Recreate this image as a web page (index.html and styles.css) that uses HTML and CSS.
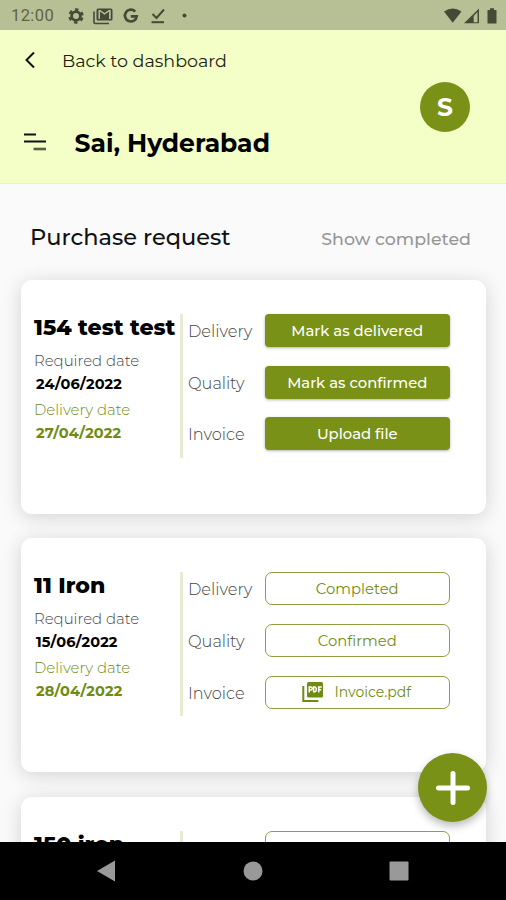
FILE: index.html
```html
<!DOCTYPE html>
<html lang="en">
<head>
<meta charset="utf-8">
<title>Purchase request</title>
<link rel="stylesheet" href="styles.css">
</head>
<body>
<div class="screen">
  <div class="status">
    <span class="clock">12:00</span>
    <svg class="status-left" width="125" height="18" viewBox="0 0 125 18" fill="#454a36">
      <g fill="none" stroke="#454a36"><circle cx="8" cy="9" r="4.400" stroke-width="2.800"/><circle cx="8" cy="9" r="6.500" stroke-width="2.400" stroke-dasharray="3.403 3.403" stroke-dashoffset="-1.700"/></g>
      <path d="M26 4.500v11q0 1 1 1h14" fill="none" stroke="#454a36" stroke-width="1.600"/>
      <path fill-rule="evenodd" d="M30 1.500h13q1.500 0 1.500 1.500v9q0 1.500-1.500 1.500h-13q-1.500 0-1.500-1.500v-9q0-1.500 1.500-1.500zM30.500 3v9h1.500v-7.500l4.500 3.300 4.500-3.300v7.500h1.700v-9h-2l-4.200 3-4.200-3z"/>
      <path d="M67.200 4.600A5.900 5.900 0 1 0 68.700 9.300H62.800" fill="none" stroke="#454a36" stroke-width="2.700"/>
      <path d="M84.500 7l4 4 7.500-8.500" fill="none" stroke="#454a36" stroke-width="2"/><path d="M83.500 14.200h12.500v2h-12.500z"/>
      <circle cx="116.500" cy="8.500" r="2"/>
    </svg>
    <svg class="status-right" width="54" height="18" viewBox="0 0 54 18" fill="#454a36">
      <path d="M0 4.500Q8.700-1.500 17.500 4.500L8.700 15.800z"/>
      <path fill-rule="evenodd" d="M35 1.500v14.800H20zM33.500 5l-3.800 4v6.300h3.800z"/>
      <path d="M43.500 3h2.500v-1.700h4v1.700h2.500v13.500h-9z"/>
    </svg>
  </div>
  <header class="header">
    <div class="header-main">
      <div class="back"><svg width="12" height="18" viewBox="0 0 12 18" fill="none" stroke="#111" stroke-width="2"><path d="M10 1.500L2.500 9l7.500 7.500"/></svg><span>Back to dashboard</span></div>
      <div class="place"><svg width="24" height="20" viewBox="0 0 24 20" stroke="#111" stroke-width="2"><path d="M1 2.500h12M1 9.500h22"/><path d="M10.500 17h12.500" stroke="#59603f" stroke-width="2.600"/></svg><h1>Sai, Hyderabad</h1></div>
    </div>
    <div class="avatar">S</div>
  </header>
  <main class="main">
    <div class="heading"><h2>Purchase request</h2><span class="show">Show completed</span></div>
    <article class="card">
      <div class="info">
        <h3>154 test test</h3>
        <p class="label">Required date</p><p class="date">24/06/2022</p>
        <p class="label green">Delivery date</p><p class="date green">27/04/2022</p>
      </div>
      <div class="steps">
        <div class="step"><span>Delivery</span><button class="btn">Mark as delivered</button></div>
        <div class="step"><span>Quality</span><button class="btn">Mark as confirmed</button></div>
        <div class="step"><span>Invoice</span><button class="btn">Upload file</button></div>
      </div>
    </article>
    <article class="card">
      <div class="info">
        <h3>11 Iron</h3>
        <p class="label">Required date</p><p class="date">15/06/2022</p>
        <p class="label green">Delivery date</p><p class="date green">28/04/2022</p>
      </div>
      <div class="steps">
        <div class="step"><span>Delivery</span><button class="btn outline">Completed</button></div>
        <div class="step"><span>Quality</span><button class="btn outline">Confirmed</button></div>
        <div class="step"><span>Invoice</span><button class="btn outline file"><svg width="22" height="22" viewBox="0 0 22 22"><path d="M1.300 5v15h15" fill="none" stroke="#6f8c12" stroke-width="2"/><rect x="5" y="1" width="16" height="15.500" rx="1.500" fill="#6f8c12"/><path d="M7.200 11.500V6h1.600a1.500 1.500 0 0 1 0 3H7.200M11.700 6v4.700h1a1.500 1.500 0 0 0 1.500-1.500v-1.700A1.500 1.500 0 0 0 12.700 6zM16.700 11.500V6h3M16.700 8.700h2.500" fill="none" stroke="#fff" stroke-width="1.500"/></svg><span>Invoice.pdf</span></button></div>
      </div>
    </article>
    <article class="card">
      <div class="info"><h3>150 iron</h3></div>
      <div class="steps"><div class="step"><span></span><button class="btn outline"></button></div></div>
    </article>
    <button class="fab" aria-label="Add"><svg width="36" height="36" viewBox="0 0 36 36" stroke="#fff" stroke-width="5" stroke-linecap="round"><path d="M18 3.500v29M3.500 18h29"/></svg></button>
  </main>
  <nav class="nav">
    <svg width="20" height="22" viewBox="0 0 20 22" fill="#999"><path d="M19 .5v21L1 11z"/></svg>
    <svg width="20" height="20" viewBox="0 0 20 20" fill="#999"><circle cx="10" cy="10" r="9.500"/></svg>
    <svg width="20" height="20" viewBox="0 0 20 20" fill="#999"><rect x=".5" y=".5" width="19" height="19" rx="1"/></svg>
  </nav>
</div>
</body>
</html>
```
FILE: styles.css
```css
* { box-sizing: border-box; }
body { margin: 0; font-family: Montserrat, Inter, sans-serif; color: #000; }
h1, h2, h3, p { margin: 0; white-space: nowrap; }
button { border: 0; padding: 0; font-family: inherit; }
svg { display: block; flex: none; }
.screen { width: 506px; height: 900px; display: flex; flex-direction: column; overflow: hidden; background: #fafafa; }

.status { flex: none; height: 30px; background: #b7bf95; display: flex; align-items: center; padding: 1px 8px 0 11px; }
.clock { font: 400 16.5px/20px Roboto, sans-serif; color: #5d6347; width: 57px; letter-spacing: .4px; }
.status-right { margin-left: auto; }

.header { flex: none; height: 154px; background: #f3ffc6; border-bottom: 1px solid #e9edda; display: flex; justify-content: space-between; padding: 17px 36px 0 23px; }
.back { display: flex; align-items: center; height: 26px; gap: 26px; font-size: 17.500px; color: #1c1e14; }
.back svg { margin: -1px 0 0 1px; }
.place { display: flex; align-items: center; height: 32px; margin-top: 54px; gap: 27.500px; }
.place svg { margin-top: -3px; }
h1 { font-size: 25px; font-weight: 700; }
.avatar { width: 50px; height: 50px; margin-top: 35px; border-radius: 50%; background: #789116; color: #fff; font-size: 25px; font-weight: 700; display: flex; align-items: center; justify-content: center; }

.main { flex: 1; min-height: 0; overflow: hidden; position: relative; padding: 36px 20px 0 21px; display: flex; flex-direction: column; gap: 24.400px; }
.heading { flex: none; height: 35.500px; display: flex; align-items: center; justify-content: space-between; padding: 0 15px 0 9px; }
h2 { font-size: 22.500px; font-weight: 500; margin-top: -2px; color: #111; }
.show { font-size: 17.400px; font-weight: 500; color: #969696; margin-top: 1px; }

.card { flex: none; height: 234px; background: #fff; border-radius: 11px; box-shadow: 0 3px 20px rgba(0, 0, 0, .16); display: flex; padding: 34px 36px 0 12px; }
.info { width: 150px; height: 144px; border-right: 3px solid #e7ebd2; padding-left: 1px; }
h3 { font-size: 22px; line-height: 28px; font-weight: 800; margin-bottom: 7px; }
.label { height: 24px; line-height: 24px; font-size: 14.900px; font-weight: 300; color: #444; }
.date { height: 25px; line-height: 23px; padding-left: 2px; font-size: 14.500px; font-weight: 700; letter-spacing: .15px; }
.green { color: #6f8c12; }
.steps { flex: 1; padding-left: 5px; display: flex; flex-direction: column; gap: 18.700px; }
.step { display: flex; align-items: center; height: 33px; font-size: 16.200px; font-weight: 300; color: #444; }
.step > span { width: 76.500px; padding-top: 1px; }
.btn { flex: 1; height: 33px; border-radius: 4px; background: #789116; color: #fff; font-size: 14.800px; font-weight: 500; padding-top: 1px; box-shadow: 0 1px 3px rgba(0, 0, 0, .3); }
.outline { background: #fff; border: 1px solid #8da044; border-radius: 7px; color: #6f8c12; font-weight: 400; box-shadow: none; }
.file { display: flex; align-items: center; justify-content: center; gap: 11px; font-size: 14px; padding: 0 2px 0 0; }

.fab { position: absolute; right: 19px; bottom: 20px; width: 69px; height: 69px; border-radius: 50%; background: #789116; display: flex; align-items: center; justify-content: center; box-shadow: 0 4px 8px rgba(0, 0, 0, .28); }
.nav { flex: none; height: 58px; background: #000; display: flex; align-items: center; justify-content: space-between; padding: 0 97px 0 96px; }
```
